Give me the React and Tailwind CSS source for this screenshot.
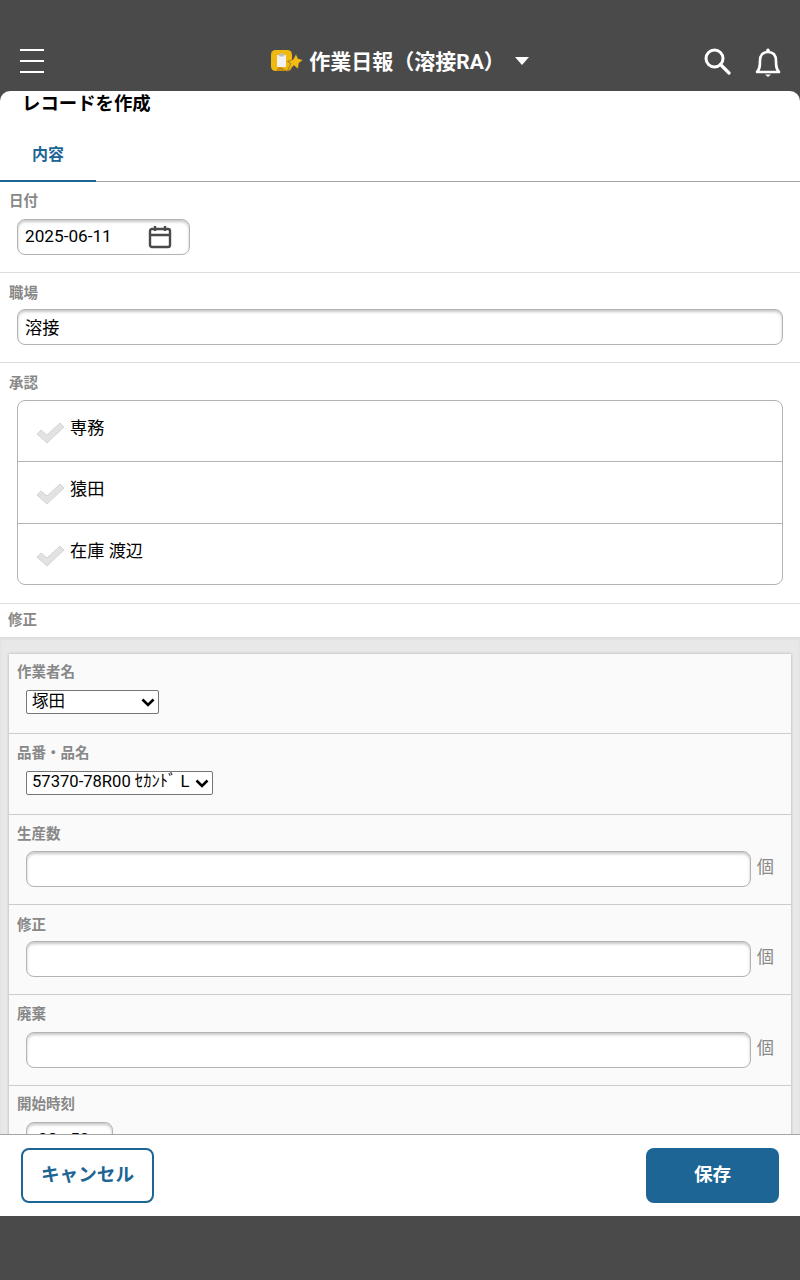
const font = { fontFamily: '"Roboto","Noto Sans CJK JP",sans-serif' };

function Label({ children, className = "" }) {
  return <div className={`h-[18px] text-[14.5px] leading-[20px] font-bold text-[#888888] ${className}`}>{children}</div>;
}

const inputCls = "rounded-[8px] border border-[#b3b3b3] bg-white shadow-[inset_0_2px_3px_rgba(0,0,0,0.22)]";

function Check() {
  return (
    <svg width="29" height="25" viewBox="0 0 29 25" className="shrink-0">
      <path d="M1 14 L5 10 L11 15 L24 3 L28 7 L11 23 Z" fill="#e2e2e2" stroke="#d4d4d4" strokeWidth="1" strokeLinejoin="round" />
    </svg>
  );
}

function Approver({ name, h, last }) {
  return (
    <div className={`flex pl-[18px] pt-[19px] gap-[5px] items-start ${last ? "" : "border-b border-[#b3b3b3]"}`} style={{ height: h }}>
      <Check />
      <span className="text-[17.2px] leading-[20px] -mt-[2px] text-black">{name}</span>
    </div>
  );
}

function NumberRow({ label, h, top, gap }) {
  return (
    <div className="border-t border-[#cccccc] pl-2 pr-[17px]" style={{ height: h, paddingTop: top }}>
      <Label>{label}</Label>
      <div className="flex items-center ml-[9px] gap-[6px]" style={{ marginTop: gap }}>
        <div className={`${inputCls} h-[36px] flex-1`} />
        <span className="text-[17.2px] leading-[20px] -mt-[4px] text-[#888888]">個</span>
      </div>
    </div>
  );
}

function Chevron() {
  return (
    <svg width="14" height="9" viewBox="0 0 14 9" className="absolute right-[4px] top-[8px] pointer-events-none" fill="none" stroke="black" strokeWidth="2.6">
      <path d="M1.5 1.5 L7 7 L12.5 1.5" />
    </svg>
  );
}

export default function App() {
  return (
    <div className="w-[800px] h-[1280px] overflow-hidden bg-[#4a4a4a] flex flex-col" style={font}>
      <header className="h-[91px] shrink-0 flex items-end pb-[14px] relative text-white">
        <div className="ml-[20px] mb-[4px] w-[24px] h-[24px] flex flex-col justify-between">
          <div className="h-[2px] bg-white" />
          <div className="h-[2px] bg-white" />
          <div className="h-[2px] bg-white" />
        </div>
        <div className="flex-1 flex items-center justify-center pr-[44px] h-[32px]">
          <svg width="32" height="24" viewBox="0 0 32 24" className="shrink-0 mr-[6px]">
            <rect x="0" y="1" width="21" height="21" rx="4.5" fill="#f0b90f" />
            <path d="M8 17 L17 22 L5 22 Z" fill="#c98f12" />
            <rect x="6" y="6" width="9" height="12" rx="1" fill="#f2f2f2" />
            <rect x="8" y="4.5" width="5" height="3" rx="0.8" fill="#bdbdbd" />
            <path d="M25 5 L27 9.5 L32 11 L28 14 L27 20 L23 16.5 L15.5 23.5 L20 14.5 L16.5 12.5 L22 10.5 Z" fill="#f4bb13" stroke="#4a4a4a" strokeWidth="0.5" />
          </svg>
          <span className="text-[21px] leading-[32px] pt-[2px] font-bold whitespace-nowrap">作業日報（溶接RA）</span>
          <svg width="14" height="8" viewBox="0 0 14 8" className="ml-[10px] shrink-0">
            <path d="M0 0 H14 L7 8 Z" fill="white" />
          </svg>
        </div>
        <svg width="28" height="28" viewBox="0 0 28 28" className="absolute left-[703px] top-[47px]" fill="none" stroke="white">
          <circle cx="11.5" cy="11.5" r="8.5" strokeWidth="3" />
          <path d="M17.5 17.5 L26 26" strokeWidth="3.2" strokeLinecap="round" />
        </svg>
        <svg width="26" height="30" viewBox="0 0 26 30" className="absolute left-[755px] top-[47px]" fill="none" stroke="white">
          <path d="M2 25 C5 22 5 19 5 14 C5 8 8 5 13 5 C18 5 21 8 21 14 C21 19 21 22 24 25 Z" strokeWidth="2.6" strokeLinejoin="round" />
          <circle cx="13" cy="3.4" r="1.8" fill="white" stroke="none" />
          <path d="M10 27.5 H16 L13 30 Z" fill="white" stroke="none" />
        </svg>
      </header>

      <main className="h-[1125px] shrink-0 bg-white rounded-t-[10px] flex flex-col overflow-hidden">
        <div className="h-[1043px] shrink-0 overflow-hidden">
          <h1 className="h-[24px] pl-[22px] text-[18.4px] leading-[26px] font-bold text-black whitespace-nowrap">レコードを作成</h1>
          <div className="h-[67px] border-b border-[#a6a6a6] relative">
            <div className="absolute left-0 top-0 w-[96px] h-[67px] border-b-2 border-[#1d6595] pt-[29px] pl-[32px] text-[16px] leading-[22px] font-bold text-[#1d6595]">内容</div>
          </div>

          <section className="h-[91px] border-b border-[#dddddd] pt-[10px] pl-[9px]">
            <Label>日付</Label>
            <div className={`${inputCls} ml-[8px] mt-[9px] w-[173px] h-[36px] flex items-center justify-between pl-[7px] pr-[17px]`}>
              <span className="text-[17.2px] text-black">2025-06-11</span>
              <svg width="24" height="24" viewBox="0 0 24 24" fill="none" stroke="#4a4a4a" strokeWidth="2.4">
                <rect x="2" y="4" width="20" height="18" rx="2" />
                <path d="M2 10 H22" />
                <path d="M7 1 V6 M17 1 V6" />
              </svg>
            </div>
          </section>

          <section className="h-[90px] border-b border-[#dddddd] pt-[11px] pl-[9px]">
            <Label>職場</Label>
            <div className={`${inputCls} ml-[8px] mr-[17px] mt-[7px] h-[36px] flex items-center pl-[7px] pt-[4px]`}>
              <span className="text-[17.2px] text-black">溶接</span>
            </div>
          </section>

          <section className="h-[241px] border-b border-[#dddddd] pt-[11px] pl-[9px]">
            <Label>承認</Label>
            <div className="ml-[8px] mr-[17px] mt-[8px] h-[185px] rounded-[8px] border border-[#b3b3b3] bg-white overflow-hidden">
              <Approver name="専務" h={61} />
              <Approver name="猿田" h={62} />
              <Approver name="在庫 渡辺" h={60} last />
            </div>
          </section>

          <div className="h-[33px] pl-[8px] pt-[7px]">
            <Label>修正</Label>
          </div>

          <div className="bg-[#e8e8e8] px-[9px] pt-[17px] h-[520px] shadow-[inset_0_2px_3px_rgba(0,0,0,0.06)]">
            <div className="bg-[#fafafa] shadow-[0_0_3px_rgba(0,0,0,0.25)] h-[503px]">
              <div className="h-[79px] pl-2 pt-[9px]">
                <Label>作業者名</Label>
                <div className="relative ml-[9px] mt-[9px] w-[133px]">
                  <select defaultValue="塚田" className="appearance-none block w-full h-[24px] border border-[#767676] rounded-[2px] bg-white text-[16.5px] leading-[20px] text-black pl-[5px] pb-[1px]">
                    <option>塚田</option>
                  </select>
                  <Chevron />
                </div>
              </div>
              <div className="h-[81px] border-t border-[#cccccc] pl-2 pt-[10px]">
                <Label>品番・品名</Label>
                <div className="relative ml-[9px] mt-[9px] w-[187px]">
                  <select defaultValue="x" className="appearance-none block w-full h-[24px] border border-[#767676] rounded-[2px] bg-white text-[16.6px] leading-[20px] text-black pl-[5px] pb-[2px]">
                    <option value="x">57370-78R00 ｾｶﾝﾄﾞ L</option>
                  </select>
                  <Chevron />
                </div>
              </div>
              <NumberRow label="生産数" h={90} top={10} gap={8} />
              <NumberRow label="修正" h={90} top={11} gap={7} />
              <NumberRow label="廃棄" h={91} top={10} gap={9} />
              <div className="border-t border-[#cccccc] pl-2 pt-[9px]">
                <Label>開始時刻</Label>
                <div className={`${inputCls} ml-[9px] mt-[9px] w-[87px] h-[36px] flex items-center pl-[11px] text-[17.2px] text-black`}>08 : 50</div>
              </div>
            </div>
          </div>
        </div>

        <footer className="h-[82px] shrink-0 border-t border-[#a6a6a6] bg-white flex items-center justify-between px-[21px]">
          <button className="w-[133px] h-[55px] rounded-[8px] border-2 border-[#1d6595] bg-white text-[#1d6595] text-[18.6px] font-bold">キャンセル</button>
          <button className="w-[133px] h-[55px] rounded-[8px] bg-[#1d6595] text-white text-[18.6px] font-bold">保存</button>
        </footer>
      </main>
    </div>
  );
}
